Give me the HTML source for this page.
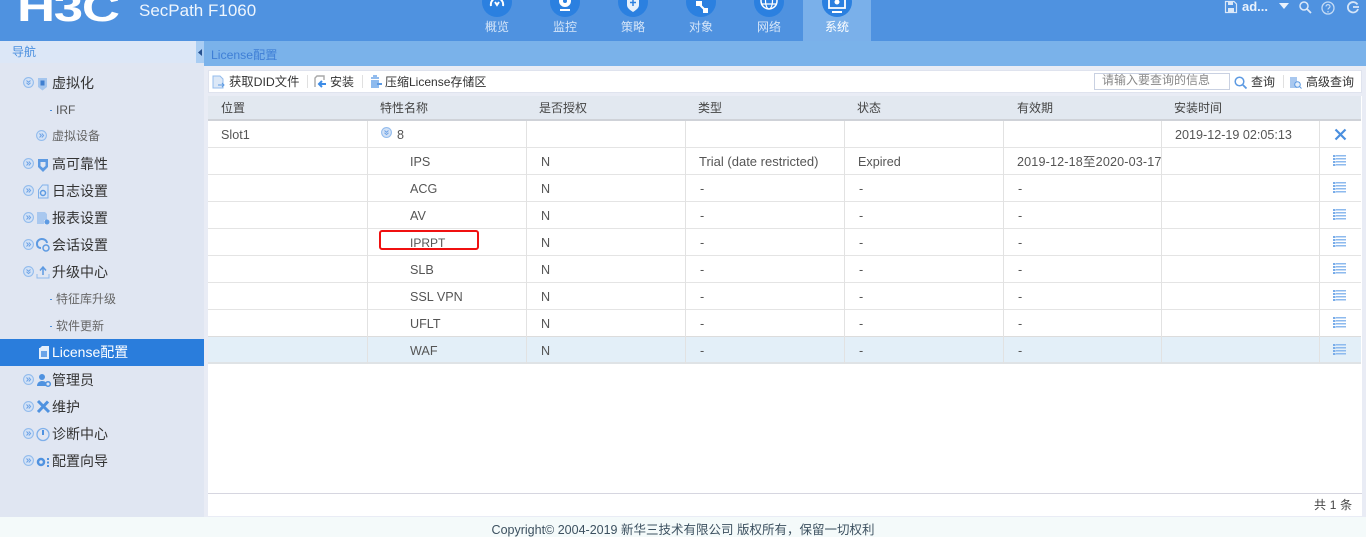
<!DOCTYPE html>
<html lang="zh"><head><meta charset="utf-8"><title>License配置</title>
<style>
*{box-sizing:border-box}
html,body{margin:0;padding:0}
body{width:1366px;height:537px;overflow:hidden;position:relative;background:#fff;font:12px "Liberation Sans","Noto Sans CJK SC",sans-serif;color:#444}
.a{position:absolute;white-space:nowrap}
.t{position:absolute;white-space:nowrap;line-height:16px;height:16px}
svg{position:absolute;overflow:visible}
.nl{position:absolute;top:19px;width:68px;text-align:center;color:#d5e5f8;font-size:12px;line-height:16px}
.nc{position:absolute;top:-13px;width:30px;height:30px;border-radius:50%;background:#2b80e0}
.m{position:absolute;left:52px;font-size:14px;color:#333;line-height:18px;white-space:nowrap}
.s{position:absolute;left:56px;font-size:12px;color:#666;line-height:16px;white-space:nowrap}
.d{position:absolute;left:50px;width:2px;height:1px;background:#4a8fdf}
.e{position:absolute;left:23px;width:11px;height:11px}
.i{position:absolute;left:36px;width:15px;height:15px}
.row{position:absolute;left:208px;width:1153px;height:27px;border-bottom:1px solid #e4e4e4}
.v{position:absolute;top:121px;width:1px;height:243px;background:#e2e2e2}
.c{position:absolute;line-height:16px;white-space:nowrap;color:#555;font-size:12.6px}
.li{position:absolute;left:1333px;width:13px;height:11px}
</style></head><body>
<svg width="0" height="0" style="position:absolute"><defs>
<symbol id="exp" viewBox="0 0 11 11"><circle cx="5.5" cy="5.5" r="4.9" fill="#d3e2f6" stroke="#93bced" stroke-width="1.1"/><path d="M3.5 3.500l2 1.800 2-1.800M3.500 5.800l2 1.800 2-1.800" fill="none" stroke="#6ea3e6" stroke-width="1"/></symbol>
<symbol id="col" viewBox="0 0 11 11"><circle cx="5.5" cy="5.5" r="4.9" fill="#d3e2f6" stroke="#93bced" stroke-width="1.1"/><path d="M3.500 3.500l1.800 2-1.800 2M5.800 3.500l1.800 2-1.800 2" fill="none" stroke="#6ea3e6" stroke-width="1"/></symbol>
<symbol id="list" viewBox="0 0 13 11"><path d="M0 0h2.500v2H0zM0 3h2.500v2H0zM0 6h2.500v2H0zM0 9h2.500v2H0z" fill="#78ace9"/><path d="M3 0h10v1.500H3zM3 3h10v1.500H3zM3 6h10v1.500H3zM3 9h10v1.500H3z" fill="#8dbaee"/></symbol>
</defs></svg>

<!-- header -->
<div class="a" style="left:0;top:0;width:1366px;height:41px;background:#4f92e0;overflow:hidden">
  <div class="a" style="left:17px;top:-14px;font:bold 40px/44px 'Liberation Sans',sans-serif;color:#fff;transform:scaleX(1.32);transform-origin:0 0;letter-spacing:-1px">H3C</div>
  <div class="a" style="left:139px;top:0;font-size:17px;line-height:22px;color:#eef5fd">SecPath F1060</div>
  <div class="a" style="left:803px;top:0;width:68px;height:41px;background:#7ab0ea"></div>
  <div class="nc" style="left:482px"></div><div class="nc" style="left:550px"></div><div class="nc" style="left:618px"></div><div class="nc" style="left:686px"></div><div class="nc" style="left:754px"></div><div class="nc" style="left:822px"></div>
  <svg style="left:482px;top:-13px" width="30" height="30"><path d="M9 19c-1-5 3-8 6-8s7 3 6 8M13 15l2 3 2-3" fill="none" stroke="#fff" stroke-width="2"/></svg>
  <svg style="left:550px;top:-13px" width="30" height="30"><circle cx="15" cy="14" r="6" fill="#fff"/><circle cx="15" cy="14" r="2" fill="#2b80e0"/><path d="M10 23h10" stroke="#fff" stroke-width="2"/></svg>
  <svg style="left:618px;top:-13px" width="30" height="30"><path d="M9 8h12v10c0 3-3 5-6 7-3-2-6-4-6-7z" fill="#e6f0fb"/><path d="M15 12v7M12 15.500h6" stroke="#2b80e0" stroke-width="1.500"/></svg>
  <svg style="left:686px;top:-13px" width="30" height="30"><path d="M10 14h6v5h-6zM17 21h5v5h-5z" fill="#fff"/><path d="M13 17l6 6" stroke="#fff" stroke-width="2"/></svg>
  <svg style="left:754px;top:-13px" width="30" height="30"><circle cx="15" cy="14" r="8" fill="none" stroke="#fff" stroke-width="1.500"/><ellipse cx="15" cy="14" rx="3.500" ry="8" fill="none" stroke="#fff" stroke-width="1.200"/><path d="M7 12h16M8 17h14" stroke="#fff" stroke-width="1.200"/></svg>
  <svg style="left:822px;top:-13px" width="30" height="30"><path d="M7 9h16v12H7z" fill="none" stroke="#fff" stroke-width="1.800"/><circle cx="15" cy="15" r="2.500" fill="#fff"/><path d="M10 25h10" stroke="#fff" stroke-width="2"/></svg>
  <div class="nl" style="left:463px">概览</div><div class="nl" style="left:531px">监控</div><div class="nl" style="left:599px">策略</div><div class="nl" style="left:667px">对象</div><div class="nl" style="left:735px">网络</div><div class="nl" style="left:803px;color:#fff">系统</div>
  <svg style="left:1225px;top:1px" width="12" height="12"><path d="M.5.500h8.500l2.500 2.500v8.500H.5z" fill="none" stroke="#dbe8f8" stroke-width="1.200"/><path d="M3 1h5v3H3zM3 7h6v4H3z" fill="#dbe8f8"/></svg>
  <div class="a" style="left:1242px;top:-1px;font-size:13px;line-height:16px;font-weight:bold;color:#eaf2fc">ad...</div>
  <svg style="left:1279px;top:3px" width="10" height="6"><path d="M0 0h10L5 6z" fill="#eaf2fc"/></svg>
  <svg style="left:1299px;top:1px" width="13" height="12"><circle cx="5" cy="5" r="4" fill="none" stroke="#dbe8f8" stroke-width="1.500"/><path d="M8 8l4 4" stroke="#dbe8f8" stroke-width="1.800"/></svg>
  <svg style="left:1321px;top:1px" width="14" height="14"><circle cx="7" cy="7" r="6" fill="none" stroke="#c4dbf5" stroke-width="1.300"/><path d="M5 5.500c0-2.500 4-2.500 4 0 0 1.500-2 1.500-2 3M7 10v1.500" fill="none" stroke="#c4dbf5" stroke-width="1.200"/></svg>
  <svg style="left:1346px;top:1px" width="14" height="13"><path d="M11.500 3.500A5.200 5.200 0 1 0 12 8" fill="none" stroke="#d5e5f8" stroke-width="1.800"/><path d="M7 6h6" stroke="#d5e5f8" stroke-width="1.800"/></svg>
</div>

<!-- sidebar -->
<div class="a" style="left:0;top:41px;width:204px;height:476px;background:#e0e6f2"></div>
<div class="a" style="left:0;top:41px;width:204px;height:22px;background:#dce7f7"></div>
<div class="t" style="left:12px;top:44px;color:#4a8fdf">导航</div>
<div class="a" style="left:196px;top:41px;width:8px;height:22px;background:#a9cdf3"></div>
<svg style="left:198px;top:49px" width="4" height="7"><path d="M4 0v7L0 3.500z" fill="#26518f"/></svg>
<div class="a" style="left:0;top:339px;width:204px;height:27px;background:#2a7ddc"></div>

<svg class="e" style="top:77px"><use href="#exp" width="11" height="11"/></svg>
<svg class="e" style="left:36px;top:130px"><use href="#col" width="11" height="11"/></svg>
<svg class="e" style="top:158px"><use href="#col" width="11" height="11"/></svg>
<svg class="e" style="top:185px"><use href="#col" width="11" height="11"/></svg>
<svg class="e" style="top:212px"><use href="#col" width="11" height="11"/></svg>
<svg class="e" style="top:239px"><use href="#col" width="11" height="11"/></svg>
<svg class="e" style="top:266px"><use href="#exp" width="11" height="11"/></svg>
<svg class="e" style="top:374px"><use href="#col" width="11" height="11"/></svg>
<svg class="e" style="top:401px"><use href="#col" width="11" height="11"/></svg>
<svg class="e" style="top:428px"><use href="#col" width="11" height="11"/></svg>
<svg class="e" style="top:455px"><use href="#col" width="11" height="11"/></svg>

<svg class="i" style="top:77px"><path d="M2 1h9v9l-4.500 3.500L2 10z" fill="#a5c6ee"/><path d="M4.500 3.500h4v5h-4z" fill="#3f7fd0"/></svg>
<svg class="i" style="top:158px"><path d="M2 1h10v8l-5 5-5-5z" fill="#5d9ae2"/><path d="M4.500 4h5v4l-2.500 2-2.500-2z" fill="#e0e6f2"/></svg>
<svg class="i" style="top:184px"><path d="M2.500 6l4-5h5.500v13H2.500z" fill="#dbe6f5" stroke="#7fb0ea"/><circle cx="7" cy="9" r="2.500" fill="none" stroke="#5d9ae2" stroke-width="1.500"/></svg>
<svg class="i" style="top:211px"><path d="M1 1h8l2 2v6H8v4H1z" fill="#a9c8ef"/><circle cx="11" cy="11" r="2.500" fill="#5d9ae2"/></svg>
<svg class="i" style="top:238px"><path d="M1 6a5 4.500 0 0 1 10-1" fill="none" stroke="#5d9ae2" stroke-width="2"/><path d="M1 6c0 3 2 4 4 4" fill="none" stroke="#5d9ae2" stroke-width="2"/><circle cx="10" cy="10" r="3" fill="none" stroke="#5d9ae2" stroke-width="1.500"/></svg>
<svg class="i" style="top:265px"><path d="M7 10V3M4 5.500L7 2l3 3.500" fill="none" stroke="#5d9ae2" stroke-width="1.500"/><path d="M1 9v4h12V9" fill="none" stroke="#8fb9ec" stroke-width="1"/></svg>
<svg class="i" style="left:37px;top:345px"><path d="M3 3l2-2h7v13H2V3z" fill="#e4effb"/><path d="M4 6h6v6H4z" fill="#6aa4e8"/></svg>
<svg class="i" style="top:373px"><circle cx="6" cy="4" r="3" fill="#4f92e0"/><path d="M1 13c0-6 8-6 9-3v3z" fill="#4f92e0"/><circle cx="12" cy="11" r="2.300" fill="none" stroke="#4f92e0" stroke-width="1.500"/></svg>
<svg class="i" style="top:400px"><path d="M2 1l11 11M12 1.500L2 12" stroke="#4f92e0" stroke-width="3"/></svg>
<svg class="i" style="top:427px"><circle cx="7" cy="7.500" r="6" fill="none" stroke="#7fb0ea" stroke-width="1.300"/><path d="M7 3v5" stroke="#4f92e0" stroke-width="2"/></svg>
<svg class="i" style="top:454px"><circle cx="5" cy="8" r="3" fill="none" stroke="#4f92e0" stroke-width="2.500"/><path d="M11 4h2v2h-2zM11 7.500h2v2h-2zM11 11h2v2h-2z" fill="#4f92e0"/></svg>

<div class="m" style="top:74px">虚拟化</div>
<div class="d" style="top:110px"></div><div class="s" style="top:102px;color:#555">IRF</div>
<div class="s" style="left:52px;top:128px">虚拟设备</div>
<div class="m" style="top:155px">高可靠性</div>
<div class="m" style="top:182px">日志设置</div>
<div class="m" style="top:209px">报表设置</div>
<div class="m" style="top:236px">会话设置</div>
<div class="m" style="top:263px">升级中心</div>
<div class="d" style="top:299px"></div><div class="s" style="top:291px">特征库升级</div>
<div class="d" style="top:326px"></div><div class="s" style="top:318px">软件更新</div>
<div class="m" style="top:343px;color:#fff">License配置</div>
<div class="m" style="top:371px">管理员</div>
<div class="m" style="top:398px">维护</div>
<div class="m" style="top:425px">诊断中心</div>
<div class="m" style="top:452px">配置向导</div>

<!-- content -->
<div class="a" style="left:204px;top:41px;width:1162px;height:476px;background:#e9ecf5"></div>
<div class="a" style="left:204px;top:41px;width:1162px;height:25px;background:#7ab2ea"></div>
<div class="t" style="left:211px;top:47px;color:#3f7fd6;font-size:12.2px">License配置</div>
<div class="a" style="left:208px;top:70px;width:1154px;height:446px;background:#fff"></div>

<!-- toolbar -->
<div class="a" style="left:208px;top:70px;width:1154px;height:23px;background:#fff;border:1px solid #dfe3ee"></div>
<div class="a" style="left:208px;top:93px;width:1154px;height:3px;background:#e9ecf5"></div>
<svg style="left:212px;top:75px" width="13" height="14"><path d="M1 1h7l3 3v9H1z" fill="#dce8f7" stroke="#94bcec"/><path d="M6 10h6M10 8l2 2-2 2" fill="none" stroke="#5d9ae2"/></svg>
<div class="t" style="left:229px;top:74px;color:#333;font-size:12.3px">获取DID文件</div>
<div class="a" style="left:307px;top:75px;width:1px;height:13px;background:#e0e0e0"></div>
<svg style="left:313px;top:75px" width="13" height="14"><path d="M2 12V3l2-2h7v4" fill="none" stroke="#a8a8a8" stroke-width="1.400"/><path d="M13 9H7M9 6l-3 3 3 3" fill="none" stroke="#3d8ce6" stroke-width="2"/></svg>
<div class="t" style="left:330px;top:74px;color:#333">安装</div>
<div class="a" style="left:362px;top:75px;width:1px;height:13px;background:#e0e0e0"></div>
<svg style="left:369px;top:75px" width="13" height="14"><path d="M2 3h8M4 1h4" stroke="#6fa6e8" stroke-width="1.500"/><path d="M2 5h8v8H2z" fill="#8dbaee"/><path d="M8 8h5v2H8z" fill="#5d9ae2"/></svg>
<div class="t" style="left:385px;top:74px;color:#333;font-size:12px">压缩License存储区</div>
<div class="a" style="left:1094px;top:73px;width:136px;height:17px;border:1px solid #c9d1e2;background:#fff"></div>
<div class="t" style="left:1102px;top:72px;color:#888">请输入要查询的信息</div>
<svg style="left:1234px;top:76px" width="13" height="13"><circle cx="5.500" cy="5.500" r="4.300" fill="none" stroke="#5d9ae2" stroke-width="1.500"/><path d="M9 9l3.500 3.500" stroke="#5d9ae2" stroke-width="1.800"/></svg>
<div class="t" style="left:1251px;top:74px;color:#333">查询</div>
<div class="a" style="left:1283px;top:75px;width:1px;height:13px;background:#e0e0e0"></div>
<svg style="left:1289px;top:76px" width="13" height="13"><path d="M1 1h7v11H1z" fill="#a9c8ef"/><circle cx="8.500" cy="8.500" r="2.800" fill="#e4eefa" stroke="#5d9ae2"/><path d="M10.500 10.500l2 2" stroke="#5d9ae2"/></svg>
<div class="t" style="left:1306px;top:74px;color:#333">高级查询</div>

<!-- table head -->
<div class="a" style="left:208px;top:96px;width:1153px;height:25px;background:#e2e8f0;border-bottom:2px solid #cfd2d8"></div>
<div class="t" style="left:221px;top:100px">位置</div>
<div class="t" style="left:380px;top:100px">特性名称</div>
<div class="t" style="left:539px;top:100px">是否授权</div>
<div class="t" style="left:698px;top:100px">类型</div>
<div class="t" style="left:857px;top:100px">状态</div>
<div class="t" style="left:1017px;top:100px">有效期</div>
<div class="t" style="left:1174px;top:100px">安装时间</div>

<!-- rows -->
<div class="row" style="top:121px"></div>
<div class="row" style="top:148px"></div>
<div class="row" style="top:175px"></div>
<div class="row" style="top:202px"></div>
<div class="row" style="top:229px"></div>
<div class="row" style="top:256px"></div>
<div class="row" style="top:283px"></div>
<div class="row" style="top:310px"></div>
<div class="row" style="top:336px;background:#e3eff8;height:28px;border-top:1px solid #dcdcdc;border-bottom:2px solid #dfe3e6"></div>
<div class="v" style="left:367px"></div><div class="v" style="left:526px"></div><div class="v" style="left:685px"></div><div class="v" style="left:844px"></div><div class="v" style="left:1003px"></div><div class="v" style="left:1161px"></div><div class="v" style="left:1319px"></div>

<div class="c" style="left:221px;top:127px">Slot1</div>
<svg style="left:381px;top:127px" width="11" height="11"><use href="#exp" width="11" height="11"/></svg>
<div class="c" style="left:397px;top:127px">8</div>
<div class="c" style="left:1175px;top:127px">2019-12-19 02:05:13</div>
<svg style="left:1334px;top:128px" width="13" height="13"><path d="M1.500 1.500l10 10M11.500 1.500l-10 10" stroke="#4a8fdf" stroke-width="2.200"/></svg>

<div class="c" style="left:410px;top:154px">IPS</div><div class="c" style="left:541px;top:154px">N</div><div class="c" style="left:699px;top:154px;font-size:13px">Trial (date restricted)</div><div class="c" style="left:858px;top:154px">Expired</div>
<div class="c" style="left:1017px;top:154px;width:144px;overflow:hidden;letter-spacing:.15px">2019-12-18至2020-03-17</div>

<div class="c" style="left:410px;top:181px">ACG</div><div class="c" style="left:541px;top:181px">N</div><div class="c" style="left:700px;top:181px">-</div><div class="c" style="left:859px;top:181px">-</div><div class="c" style="left:1018px;top:181px">-</div>
<div class="c" style="left:410px;top:208px">AV</div><div class="c" style="left:541px;top:208px">N</div><div class="c" style="left:700px;top:208px">-</div><div class="c" style="left:859px;top:208px">-</div><div class="c" style="left:1018px;top:208px">-</div>
<div class="c" style="left:410px;top:235px;font-size:12px">IPRPT</div><div class="c" style="left:541px;top:235px">N</div><div class="c" style="left:700px;top:235px">-</div><div class="c" style="left:859px;top:235px">-</div><div class="c" style="left:1018px;top:235px">-</div>
<div class="c" style="left:410px;top:262px">SLB</div><div class="c" style="left:541px;top:262px">N</div><div class="c" style="left:700px;top:262px">-</div><div class="c" style="left:859px;top:262px">-</div><div class="c" style="left:1018px;top:262px">-</div>
<div class="c" style="left:410px;top:289px">SSL VPN</div><div class="c" style="left:541px;top:289px">N</div><div class="c" style="left:700px;top:289px">-</div><div class="c" style="left:859px;top:289px">-</div><div class="c" style="left:1018px;top:289px">-</div>
<div class="c" style="left:410px;top:316px">UFLT</div><div class="c" style="left:541px;top:316px">N</div><div class="c" style="left:700px;top:316px">-</div><div class="c" style="left:859px;top:316px">-</div><div class="c" style="left:1018px;top:316px">-</div>
<div class="c" style="left:410px;top:343px">WAF</div><div class="c" style="left:541px;top:343px">N</div><div class="c" style="left:700px;top:343px">-</div><div class="c" style="left:859px;top:343px">-</div><div class="c" style="left:1018px;top:343px">-</div>

<svg class="li" style="top:155px"><use href="#list" width="13" height="11"/></svg>
<svg class="li" style="top:182px"><use href="#list" width="13" height="11"/></svg>
<svg class="li" style="top:209px"><use href="#list" width="13" height="11"/></svg>
<svg class="li" style="top:236px"><use href="#list" width="13" height="11"/></svg>
<svg class="li" style="top:263px"><use href="#list" width="13" height="11"/></svg>
<svg class="li" style="top:290px"><use href="#list" width="13" height="11"/></svg>
<svg class="li" style="top:317px"><use href="#list" width="13" height="11"/></svg>
<svg class="li" style="top:344px"><use href="#list" width="13" height="11"/></svg>

<!-- highlight -->
<div class="a" style="left:379px;top:230px;width:100px;height:20px;border:2px solid #f01010;border-radius:3px"></div>

<!-- pagination -->
<div class="a" style="left:208px;top:493px;width:1154px;height:1px;background:#d6d6e0"></div>
<div class="t" style="left:1314px;top:497px;color:#444;letter-spacing:.2px">共 1 条</div>

<!-- footer -->
<div class="a" style="left:0;top:517px;width:1366px;height:20px;background:#f4fafa"></div>
<div class="a" style="left:0;top:522px;width:1366px;text-align:center;line-height:16px;color:#3d5160;font-size:12.500px">Copyright© 2004-2019 新华三技术有限公司 版权所有，保留一切权利</div>
</body></html>
